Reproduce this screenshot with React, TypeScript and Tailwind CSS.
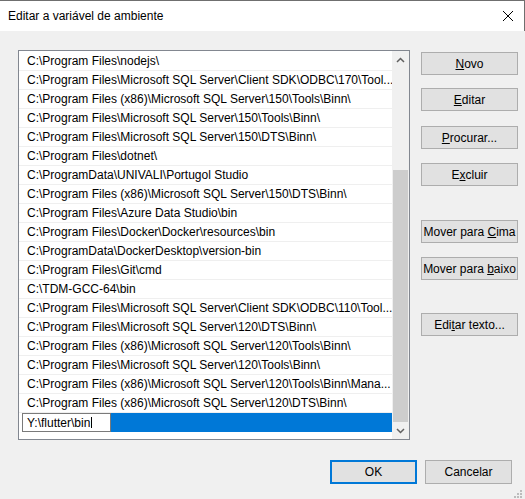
import React from 'react';

const entries = [
  'C:\\Program Files\\nodejs\\',
  'C:\\Program Files\\Microsoft SQL Server\\Client SDK\\ODBC\\170\\Tool...',
  'C:\\Program Files (x86)\\Microsoft SQL Server\\150\\Tools\\Binn\\',
  'C:\\Program Files\\Microsoft SQL Server\\150\\Tools\\Binn\\',
  'C:\\Program Files\\Microsoft SQL Server\\150\\DTS\\Binn\\',
  'C:\\Program Files\\dotnet\\',
  'C:\\ProgramData\\UNIVALI\\Portugol Studio',
  'C:\\Program Files (x86)\\Microsoft SQL Server\\150\\DTS\\Binn\\',
  'C:\\Program Files\\Azure Data Studio\\bin',
  'C:\\Program Files\\Docker\\Docker\\resources\\bin',
  'C:\\ProgramData\\DockerDesktop\\version-bin',
  'C:\\Program Files\\Git\\cmd',
  'C:\\TDM-GCC-64\\bin',
  'C:\\Program Files\\Microsoft SQL Server\\Client SDK\\ODBC\\110\\Tool...',
  'C:\\Program Files\\Microsoft SQL Server\\120\\DTS\\Binn\\',
  'C:\\Program Files (x86)\\Microsoft SQL Server\\120\\Tools\\Binn\\',
  'C:\\Program Files\\Microsoft SQL Server\\120\\Tools\\Binn\\',
  'C:\\Program Files (x86)\\Microsoft SQL Server\\120\\Tools\\Binn\\Mana...',
  'C:\\Program Files (x86)\\Microsoft SQL Server\\120\\DTS\\Binn\\',
];

function DialogButton({ children, className = '' }: { children: React.ReactNode; className?: string }) {
  return (
    <button
      className={
        'flex h-[23px] w-[97px] items-center justify-center border border-[#adadad] bg-[#e1e1e1] text-[12px] leading-none text-black ' +
        className
      }
    >
      {children}
    </button>
  );
}

function Chevron({ up }: { up?: boolean }) {
  return (
    <svg width="9" height="6" viewBox="0 0 9 6">
      <path
        d={up ? 'M1 5 L4.5 1.5 L8 5' : 'M1 1 L4.5 4.5 L8 1'}
        fill="none"
        stroke="#606060"
        strokeWidth="1.5"
      />
    </svg>
  );
}

function PathList() {
  return (
    <div className="flex h-[390px] w-[392px] border border-[#828790] bg-white">
      <div className="flex-1 overflow-hidden pt-px">
        {entries.map((entry, i) => (
          <div
            key={i}
            className="flex h-[19px] items-center whitespace-nowrap border-b border-[#efefef] pl-2"
          >
            {entry}
          </div>
        ))}
        <div className="flex h-[19px]">
          <div className="ml-[3px] flex h-[19px] w-[89px] items-center border border-[#7a7a7a] bg-white pl-[4px]">
            <span>Y:\flutter\bin</span>
            <span className="ml-px h-[11px] w-px bg-black" />
          </div>
          <div className="flex-1 bg-[#0078d7]" />
        </div>
      </div>
      <div className="flex w-[17px] flex-col bg-[#f0f0f0]">
        <div className="flex h-[17px] items-center justify-center">
          <Chevron up />
        </div>
        <div className="flex flex-1 flex-col justify-end">
          <div className="mx-px h-[252px] bg-[#cdcdcd]" />
        </div>
        <div className="flex h-[17px] items-center justify-center">
          <Chevron />
        </div>
      </div>
    </div>
  );
}

export default function App() {
  return (
    <div className="relative flex h-[499px] w-[525px] flex-col overflow-hidden bg-[#f0f0f0] font-['Liberation_Sans',Arial,sans-serif] text-[12px] text-black">
      <header className="flex h-[31px] shrink-0 items-center justify-between border-t border-r border-[#6f6f6f] bg-white pl-2 pr-[11px]">
        <span>Editar a variável de ambiente</span>
        <svg width="10" height="10" viewBox="0 0 10 10">
          <path d="M0 0 L10 10 M10 0 L0 10" stroke="#000" strokeWidth="1" />
        </svg>
      </header>

      <section className="flex pl-[18px] pt-[19px]">
        <PathList />
        <div className="ml-[11px] flex flex-col">
          <DialogButton className="mt-[2px]">
            <u>N</u>ovo
          </DialogButton>
          <DialogButton className="mt-[13px]">
            <u>E</u>ditar
          </DialogButton>
          <DialogButton className="mt-[15px]">
            <u>P</u>rocurar...
          </DialogButton>
          <DialogButton className="mt-[14px]">
            E<u>x</u>cluir
          </DialogButton>
          <DialogButton className="mt-[34px]">
            Mover para&nbsp;<u>C</u>ima
          </DialogButton>
          <DialogButton className="mt-[14px]">
            Mover para&nbsp;<u>b</u>aixo
          </DialogButton>
          <DialogButton className="mt-[33px]">
            Edi<u>t</u>ar texto...
          </DialogButton>
        </div>
      </section>

      <footer className="mt-[20px] flex justify-end gap-[8px] pr-[13px]">
        <button className="h-[24px] w-[87px] border-2 border-[#0078d7] bg-[#e1e1e1]">OK</button>
        <button className="h-[24px] w-[87px] border border-[#adadad] bg-[#e1e1e1]">Cancelar</button>
      </footer>

      {/* size grip */}
      <div className="absolute bottom-[1px] right-[3px] grid grid-cols-3 gap-px">
        <span className="h-[2px] w-[2px]" />
        <span className="h-[2px] w-[2px]" />
        <span className="h-[2px] w-[2px] bg-[#bcbcbc]" />
        <span className="h-[2px] w-[2px]" />
        <span className="h-[2px] w-[2px] bg-[#bcbcbc]" />
        <span className="h-[2px] w-[2px] bg-[#bcbcbc]" />
        <span className="h-[2px] w-[2px] bg-[#bcbcbc]" />
        <span className="h-[2px] w-[2px] bg-[#bcbcbc]" />
        <span className="h-[2px] w-[2px] bg-[#bcbcbc]" />
      </div>
    </div>
  );
}
